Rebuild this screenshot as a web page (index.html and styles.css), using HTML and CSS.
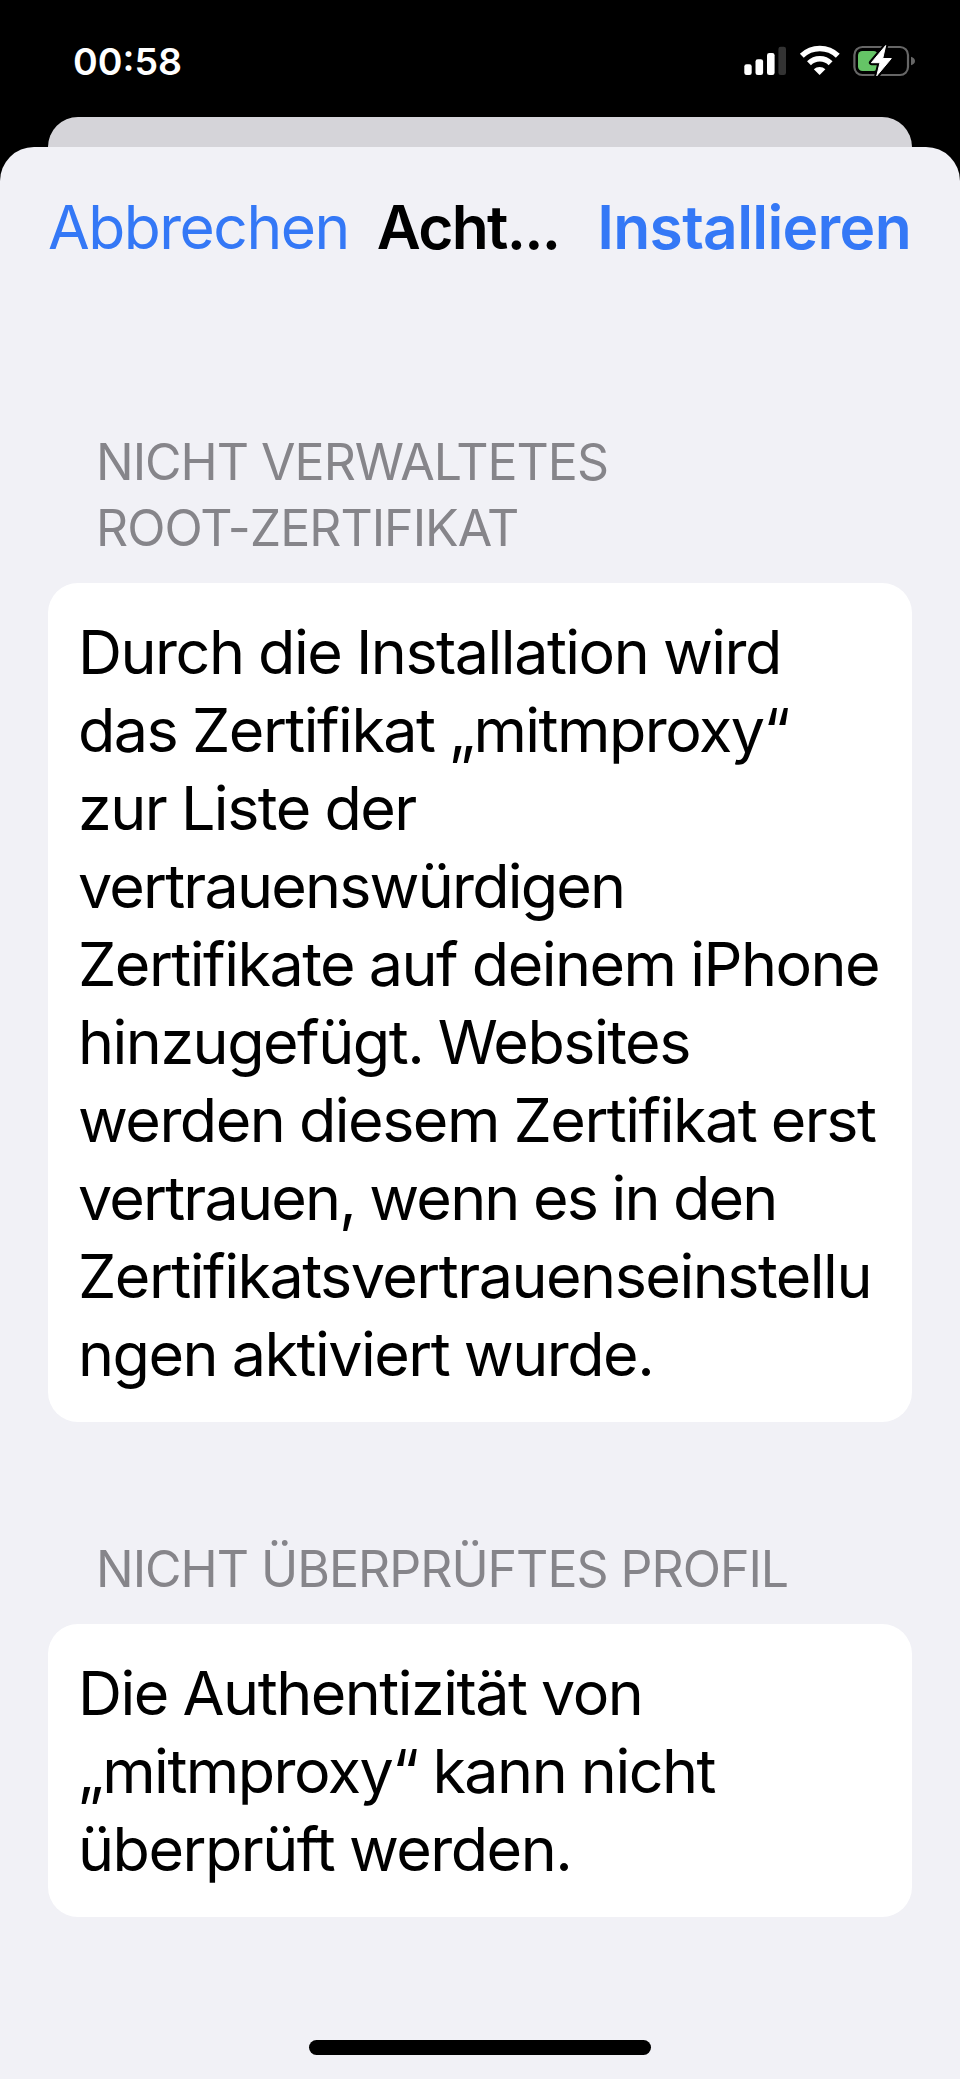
FILE: index.html
```html
<!DOCTYPE html>
<html lang="de"><head><meta charset="utf-8"><title>Achtung</title><link rel="stylesheet" href="styles.css"></head>
<body>
<header class="status"><span class="time"><svg class="time-text" width="112" height="44"><text x="0" y="35.5" textLength="109" lengthAdjust="spacingAndGlyphs">00:58</text></svg></span>
<svg class="indicators" width="174" height="36" viewBox="742 43 174 36">
<rect x="744.3" y="64.3" width="7.4" height="10.7" rx="2.3" fill="#fff"/><rect x="755.5" y="59.3" width="7.6" height="15.7" rx="2.3" fill="#fff"/><rect x="767" y="53" width="7.6" height="22" rx="2.3" fill="#fff"/><rect x="778.4" y="46.7" width="7.6" height="28.3" rx="2.3" fill="#333"/>
<g fill="none" stroke="#fff" stroke-width="5.6"><path d="M801.8 55.8A26 26 0 0 1 837.8 55.8"/><path d="M809 63.2A15.5 15.5 0 0 1 830.6 63.2"/></g><path d="M813.8 69.3A8.5 8.5 0 0 1 825.4 69.3L819.6 75Z" fill="#fff"/>
<rect x="854.4" y="47" width="53.6" height="28" rx="8" fill="none" stroke="#666" stroke-width="2.2"/><path d="M911 56.7Q915 58 915 61T911 65.3Z" fill="#666"/><rect x="858" y="51" width="20" height="20" rx="4.5" fill="#65c466"/><path d="M885.7 45.5L871.4 62.7H880L876.8 75.8L891.3 58.5H882.7Z" fill="#fff" stroke="#000" stroke-width="5" stroke-linejoin="round"/><path d="M885.7 45.5L871.4 62.7H880L876.8 75.8L891.3 58.5H882.7Z" fill="#fff" stroke="#fff" stroke-width="1" stroke-linejoin="round"/>
</svg></header>
<div class="back"></div>
<main class="sheet">
<nav class="bar"><span class="cancel">Abbrechen</span><span class="title">Acht...</span><span class="install">Installieren</span></nav>
<section class="first"><h2>NICHT VERWALTETES<br>ROOT-ZERTIFIKAT</h2><div class="card">Durch die Installation wird<br>das Zertifikat „mitmproxy“<br>zur Liste der<br><span class="tight">vertrauenswürdigen</span><br>Zertifikate auf deinem iPhone<br>hinzugefügt. Websites<br>werden diesem Zertifikat erst<br><span class="tight">vertrauen, wenn es in den</span><br>Zertifikatsvertrauenseinstellu<br>ngen aktiviert wurde.</div></section>
<section class="second"><h2>NICHT ÜBERPRÜFTES PROFIL</h2><div class="card">Die Authentizität von<br>„mitmproxy“ kann nicht<br>überprüft werden.</div></section>
<div class="home"></div></main></body></html>
```
FILE: styles.css
```css
*{box-sizing:border-box}
body{margin:0;background:#000;font-family:Inter,sans-serif;width:960px;height:2079px;overflow:hidden;display:flex;flex-direction:column}
.status{height:117px;padding:43px 44px 0 73px;display:flex;justify-content:space-between;align-items:flex-start}
.time{margin-top:-4px}.time-text text{fill:#fff;font-size:37.5px;font-weight:600}
.back{height:60px;margin:0 48px -30px;background:#d5d4d9;border-radius:30px 30px 0 0}
.sheet{flex:1;background:#f1f1f6;border-radius:34px 34px 0 0;padding:0 48px;display:flex;flex-direction:column;align-items:stretch}
.bar{height:160px;display:flex;align-items:center;font-size:60.5px;color:#3478f6}
.cancel{letter-spacing:-1.5px}
.title{color:#000;font-weight:600;letter-spacing:-1.7px;margin-left:28px}
.install{font-weight:600;letter-spacing:-.7px;margin:0 1px 0 auto}
.first{margin-top:122px}.second{margin-top:114px}
h2{margin:0;padding-left:48px;font-size:50px;line-height:66px;font-weight:400;color:#86858a;letter-spacing:-1px}
.card{margin-top:22px;padding:30px 30px 29px;background:#fff;border-radius:30px;font-size:61px;line-height:78px;white-space:nowrap;letter-spacing:-1.5px;word-spacing:-1px}
.tight{letter-spacing:-1.8px}
.home{margin:auto auto 24px;width:342px;height:15px;border-radius:8px;background:#000}
```
